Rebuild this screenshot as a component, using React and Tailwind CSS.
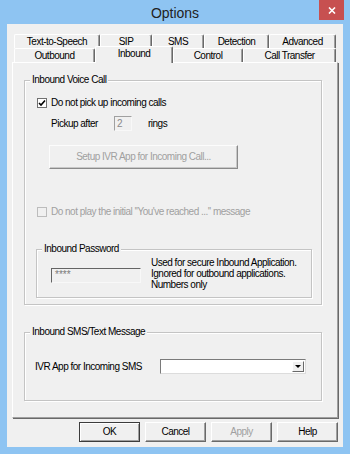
import React from "react";

const Tab = ({ label, w, selected }) => {
  if (selected) {
    return (
      <div
        className="relative z-10 h-[17px] mb-[-1px] bg-[#f0f0f0] border-l border-t border-white border-r border-r-[#696969] shadow-[inset_-1px_0_0_#a0a0a0] flex items-center justify-center pb-[3px] rounded-t-[2px]"
        style={{ width: w }}
      >
        {label}
      </div>
    );
  }
  return (
    <div
      className="h-[14px] bg-[#f0f0f0] border-l border-t border-white border-r border-r-[#696969] shadow-[inset_-1px_0_0_#a0a0a0] flex items-center justify-center rounded-t-[2px]"
      style={{ width: w }}
    >
      {label}
    </div>
  );
};

const Check = ({ checked, disabled }) => (
  <div
    className={
      "w-[10px] h-[10px] border flex items-center justify-center " +
      (disabled ? "border-[#bcbcbc] bg-[#f0f0f0]" : "border-[#707070] bg-white")
    }
  >
    {checked && (
      <svg width="8" height="8" viewBox="0 0 8 8">
        <path d="M1 4 L3 6 L7 1.5" fill="none" stroke="#000" strokeWidth="1.6" />
      </svg>
    )}
  </div>
);

const Group = ({ label, className, children }) => (
  <div
    className={
      "relative border border-[#c4c4c4] shadow-[inset_1px_1px_0_#fff,1px_1px_0_#fff] " +
      (className || "")
    }
  >
    <div className="absolute top-[-7px] left-[5px] px-[2px] bg-[#f0f0f0] leading-[12px] text-black">
      {label}
    </div>
    {children}
  </div>
);

const Btn = ({ label, def, disabled }) => (
  <div
    className={
      "w-[61px] h-[20px] bg-[#f0f0f0] flex items-center justify-center " +
      (def
        ? "border border-[#3c3c3c] shadow-[inset_1px_1px_0_#fff,inset_-1px_-1px_0_#a0a0a0]"
        : "border border-white border-r-[#696969] border-b-[#696969] shadow-[inset_-1px_-1px_0_#a0a0a0]") +
      (disabled ? " text-[#a0a0a0]" : " text-black")
    }
  >
    {label}
  </div>
);

export default function App() {
  return (
    <div className="w-[350px] h-[454px] bg-[#8ec4f2] flex flex-col font-['Liberation_Sans',Arial,sans-serif] text-[10px] tracking-[-0.5px] leading-[12px] text-black">
      <div className="h-[24px] grid grid-cols-[1fr_auto_1fr]">
        <div />
        <div className="text-[14px] tracking-normal text-[#222] leading-[24px] pt-[1px]">Options</div>
        <div className="flex justify-end items-start pr-[6px]">
          <div className="w-[25px] h-[20px] bg-[#c75050] flex items-center justify-center">
            <svg width="8" height="7" viewBox="0 0 8 7">
              <path d="M1 0.5 L7 6.5 M7 0.5 L1 6.5" stroke="#fff" strokeWidth="1.6" />
            </svg>
          </div>
        </div>
      </div>

      <div className="mx-[7px] h-[423px] bg-[#f0f0f0] px-[5px] pt-[10px] flex flex-col">
        <div className="flex h-[14px] ml-[2px]">
          <Tab label="Text-to-Speech" w={86} />
          <Tab label="SIP" w={52} />
          <Tab label="SMS" w={52} />
          <Tab label="Detection" w={65} />
          <Tab label="Advanced" w={67} />
        </div>
        <div className="flex h-[14px] ml-[2px] items-end">
          <Tab label="Outbound" w={81} />
          <Tab label="Inbound" w={78} selected />
          <Tab label="Control" w={70} />
          <Tab label="Call Transfer" w={93} />
        </div>

        <div className="h-[356px] border-l border-t border-white border-r border-b border-r-[#a0a0a0] border-b-[#a0a0a0] shadow-[1px_1px_0_#696969] pl-[11px] pr-[15px] pt-[17px] flex flex-col">
          <Group label="Inbound Voice Call" className="h-[225px] pl-[11px] pr-[10px] pt-[16px] flex flex-col">
            <div className="h-[12px] flex items-center gap-[4px] ml-[1px]">
              <Check checked />
              <span>Do not pick up incoming calls</span>
            </div>
            <div className="h-[15px] mt-[7px] ml-[15px] flex items-center">
              <span className="w-[63px]">Pickup after</span>
              <div className="w-[18px] h-[15px] border border-[#f8f8f8] border-t-[#a0a0a0] border-l-[#a0a0a0] bg-[#f0f0f0] text-[#8a8a8a] pl-[2px] leading-[13px]">
                2
              </div>
              <span className="ml-[16px]">rings</span>
            </div>
            <div className="mt-[14px] ml-[13px] w-[189px] h-[24px] bg-[#f0f0f0] border border-[#fcfcfc] border-r-[#8a8a8a] border-b-[#8a8a8a] shadow-[inset_-1px_-1px_0_#c8c8c8] flex items-center justify-center text-[#a0a0a0]">
              Setup IVR App for Incoming Call...
            </div>
            <div className="h-[12px] mt-[37px] flex items-center gap-[4px] ml-[1px] text-[#a0a0a0]">
              <Check disabled />
              <span>Do not play the initial ''You've reached ...'' message</span>
            </div>
            <Group label="Inbound Password" className="mt-[31px] w-[276px] h-[49px] pl-[14px] pt-[7px] flex items-start">
              <div className="mt-[11px] w-[90px] h-[15px] border border-[#f8f8f8] border-t-[#646464] border-l-[#646464] bg-[#f0f0f0] text-[#7a7a7a] text-[10px] tracking-[0px] leading-[10px] pl-[3px] pt-[1px]">
                ****
              </div>
              <div className="ml-[10px] leading-[11px]">
                <div>Used for secure Inbound Application.</div>
                <div>Ignored for outbound applications.</div>
                <div>Numbers only</div>
              </div>
            </Group>
          </Group>

          <Group label="Inbound SMS/Text Message" className="mt-[27px] h-[69px] pl-[10px] pt-[26px] flex items-start">
            <div className="h-[15px] flex items-center">
              <span className="w-[125px]">IVR App for Incoming SMS</span>
              <div className="w-[146px] h-[15px] bg-white border border-[#dcdcdc] border-t-[#7a7a7a] border-l-[#7a7a7a] flex justify-end p-[1px]">
                <div className="w-[12px] h-full bg-[#f0f0f0] border border-white border-r-[#696969] border-b-[#696969] flex items-center justify-center">
                  <svg width="6" height="3" viewBox="0 0 6 3">
                    <path d="M0 0 H6 L3 3 Z" fill="#000" />
                  </svg>
                </div>
              </div>
            </div>
          </Group>
        </div>

        <div className="mt-[4px] flex justify-end gap-[5px]">
          <Btn label="OK" def />
          <Btn label="Cancel" />
          <Btn label="Apply" disabled />
          <Btn label="Help" />
        </div>
      </div>
    </div>
  );
}
